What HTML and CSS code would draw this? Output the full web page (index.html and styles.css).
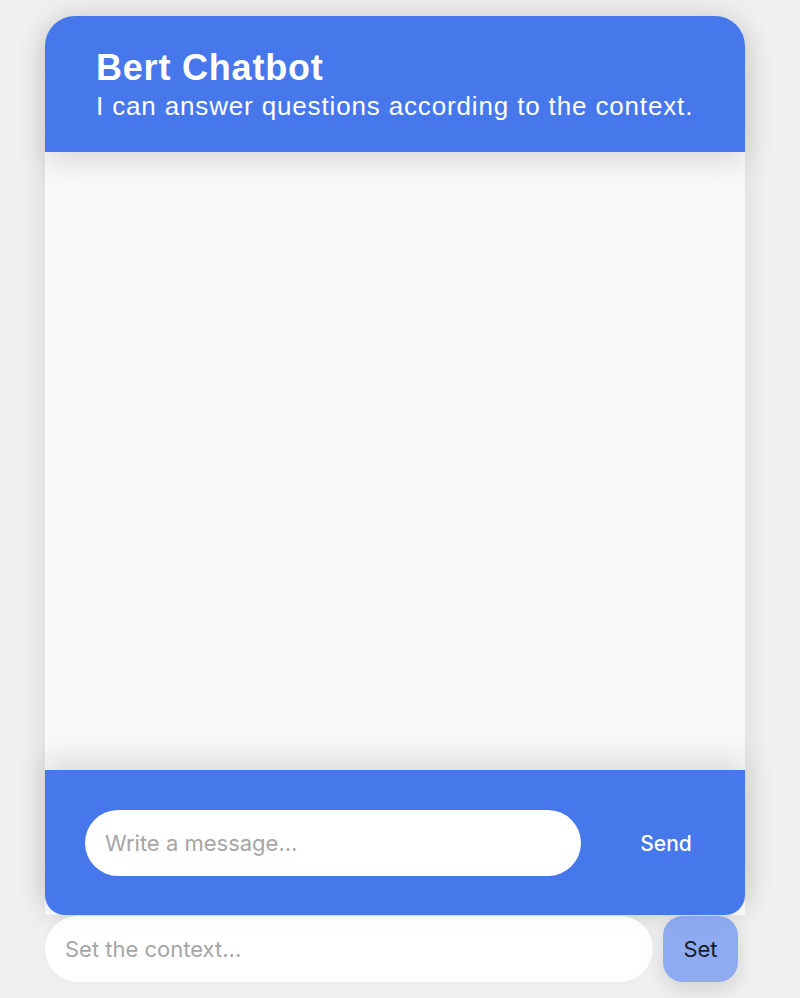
FILE: index.html
```html
<!DOCTYPE html>
<html>
<head>
<meta charset="utf-8">
<link rel="stylesheet" href="styles.css">
</head>
<body>
<div class="page">
  <div class="chatbox">
    <div class="header">
      <h1 class="title">Bert Chatbot</h1>
      <p class="subtitle">I can answer questions according to the context.</p>
    </div>
    <div class="messages"></div>
    <div class="footer">
      <input class="msg-input" type="text" placeholder="Write a message...">
      <button class="send">Send</button>
    </div>
  </div>
  <div class="context">
    <input class="ctx-input" type="text" placeholder="Set the context...">
    <button class="set">Set</button>
  </div>
</div>
</body>
</html>
```
FILE: styles.css
```css
html, body {
  margin: 0;
  padding: 0;
  background: #f0f0f0;
  height: 100%;
}
body {
  font-family: "Liberation Sans", Arial, sans-serif;
}
.page {
  width: 700px;
  margin: 0 auto;
  padding-top: 16px;
  position: relative;
  left: -5px;
}
.chatbox {
  background: #f9f9f9;
  border-radius: 30px 30px 0 0;
  box-shadow: 0 0 30px rgba(0,0,0,0.10);
  display: flex;
  flex-direction: column;
}
.header {
  background: #4678ec;
  border-radius: 30px 30px 0 0;
  height: 136px;
  box-sizing: border-box;
  padding: 32px 51px 0;
  color: #fff;
  box-shadow: 0 10px 30px rgba(0,0,0,0.13);
  position: relative;
  z-index: 1;
}
.title {
  margin: 0;
  font-size: 36px;
  font-weight: 700;
  line-height: 40px;
  letter-spacing: 0.8px;
}
.subtitle {
  margin: 0;
  font-size: 26px;
  line-height: 36px;
  letter-spacing: 0.85px;
}
.messages {
  height: 618px;
  background: #f9f9f9;
}
.footer {
  background: #4678ec;
  border-radius: 0 0 20px 20px;
  height: 145px;
  box-sizing: border-box;
  padding: 40px 14px 0 40px;
  display: flex;
  align-items: flex-start;
  box-shadow: 0 -10px 30px rgba(0,0,0,0.13);
  position: relative;
}
.msg-input {
  width: 496px;
  height: 66px;
  box-sizing: border-box;
  border: none;
  border-radius: 33px;
  background: #fff;
  padding: 0 20px;
  font-family: Inter, "Noto Sans", sans-serif;
  font-size: 22px;
  outline: none;
}
.msg-input::placeholder, .ctx-input::placeholder {
  color: #a6a6a6;
}
.send {
  flex: 1;
  margin-left: 20px;
  height: 66px;
  border: none;
  background: transparent;
  color: #fff;
  font-family: Inter, "Noto Sans", sans-serif;
  font-size: 21px;
  font-weight: 500;
  padding: 0;
}
.context {
  display: flex;
  gap: 10px;
  margin-top: 1px;
}
.ctx-input {
  width: 608px;
  height: 66px;
  box-sizing: border-box;
  border: none;
  border-radius: 33px;
  background: #fff;
  padding: 0 20px;
  font-family: Inter, "Noto Sans", sans-serif;
  font-size: 22px;
  outline: none;
  box-shadow: 0 0 10px rgba(0,0,0,0.03);
}
.set {
  width: 75px;
  height: 66px;
  border: none;
  border-radius: 20px;
  background: #8eaaf0;
  color: #1a1a2a;
  font-family: Inter, "Noto Sans", sans-serif;
  font-size: 22px;
  padding: 0;
  box-shadow: 0 8px 20px rgba(0,0,0,0.12);
}
```
